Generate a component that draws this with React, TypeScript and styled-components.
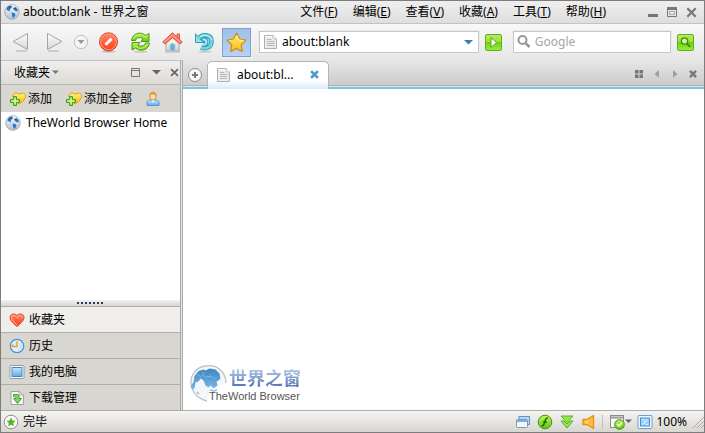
import React, { useState } from 'react';
import styled, { createGlobalStyle } from 'styled-components';

const Global = createGlobalStyle`
  * { box-sizing: border-box; }
  body { margin: 0; background: #fff; }
  body, button, input {
    font: 12px/16px "Noto Sans", "Noto Sans CJK SC", sans-serif;
    color: #000;
  }
  button { margin: 0; padding: 0; border: 0; background: none; cursor: pointer; white-space: nowrap; }
  svg { display: block; flex: none; }
  ul { margin: 0; padding: 0; list-style: none; }
`;

const Window = styled.div`
  display: flex;
  flex-direction: column;
  min-height: 100vh;
  border: 1px solid #7d7d7d;
`;

const TitleBar = styled.header`
  display: flex;
  align-items: center;
  height: 23px;
  padding: 0 5px 0 3px;
  border-bottom: 1px solid #c3c3c3;
  background: linear-gradient(#efefef, #e7e7e7 50%, #dedede);
`;

const Title = styled.h1`
  margin: 0 auto 0 3px;
  font-size: 12px;
  line-height: 16px;
  font-weight: 400;
  white-space: nowrap;
`;

const Menu = styled.nav`
  display: flex;
  gap: 15px;
  margin-right: 39px;
`;

const WindowControls = styled.div`
  display: flex;
  gap: 3px;
`;

const IconButton = styled.button<{ $w?: number; $h?: number }>`
  display: flex;
  align-items: center;
  justify-content: center;
  flex: none;
  width: ${p => p.$w ?? 16}px;
  height: ${p => p.$h ?? 16}px;
`;

const ToolBar = styled.div`
  display: flex;
  align-items: center;
  height: 36px;
  padding: 0 10px 0 3px;
  background: linear-gradient(#f8f8f8, #e7e7e7);
`;

const NavGroup = styled.div`
  display: flex;
  align-items: center;
  gap: 2px;
  margin-right: 8px;
`;

const Commands = styled.div`
  display: flex;
`;

const StarToggle = styled(IconButton)`
  border: 1px solid #7f9fca;
  background: linear-gradient(#9fc0e8, #b6d3f4);
  box-shadow: 0 0 0 1px #f4f4f4;
`;

const Field = styled.form<{ $grow: number; $pad: number }>`
  display: flex;
  align-items: center;
  gap: 3px;
  flex: ${p => p.$grow} 1 0;
  min-width: 0;
  height: 22px;
  padding: 0 ${p => p.$pad}px;
  border: 1px solid #c6c6c6;
  background: #fff;
  box-shadow: 0 0 0 1px #ececec;
`;

const FieldInput = styled.input`
  flex: 1;
  min-width: 0;
  padding: 0;
  border: 0;
  outline: 0;
  background: transparent;
  &::placeholder { color: #a5a5a5; opacity: 1; }
`;

const GreenButton = styled.button<{ $after?: number }>`
  display: flex;
  align-items: center;
  justify-content: center;
  flex: none;
  width: 17px;
  height: 17px;
  margin: 0 ${p => p.$after ?? 0}px 0 6px;
  border: 1px solid #5fae22;
  border-radius: 2px;
  background: linear-gradient(#b5ec5c, #9be23e 45%, #70d010 50%, #97ec3c);
`;

const Body = styled.div`
  display: flex;
  flex: 1;
`;

const Sidebar = styled.aside`
  display: flex;
  flex-direction: column;
  flex: none;
  width: 179px;
  background: #d8d6d0;
`;

const Divider = styled.div`
  flex: none;
  width: 3px;
  border: solid #aaa;
  border-width: 0 1px;
  background: #e2e2e2;
`;

const PanelHeader = styled.div`
  display: flex;
  align-items: center;
  height: 25px;
  padding: 0 0 0 13px;
  border-top: 1px solid #c4c4c4;
  border-bottom: 1px solid #b8b7b4;
  background: linear-gradient(#f0efed, #dddbd6);
`;

const PanelTitle = styled.button`
  display: flex;
  align-items: center;
  gap: 2px;
  margin-right: auto;
`;

const PanelTools = styled.div`
  display: flex;
  gap: 5px;
`;

const FavouriteTools = styled.div`
  display: flex;
  align-items: center;
  gap: 13px;
  height: 27px;
  padding: 0 8px;
`;

const LabelButton = styled.button`
  display: flex;
  align-items: center;
  gap: 2px;
`;

const Favourites = styled.ul`
  flex: 1;
  background: #fff;
`;

const FavouriteLink = styled.a`
  display: flex;
  align-items: center;
  gap: 5px;
  height: 22px;
  padding: 0 4px;
  color: #000;
  text-decoration: none;
  white-space: nowrap;
`;

const Splitter = styled.div`
  display: flex;
  align-items: center;
  justify-content: center;
  height: 6px;
  background: linear-gradient(#f2f2f2, #d5d5d5);
`;

const Sections = styled.ul`
  flex: none;
`;

const SectionButton = styled.button<{ $active: boolean }>`
  display: flex;
  align-items: center;
  gap: 4px;
  width: 100%;
  height: 26px;
  padding: 0 8px;
  border-top: 1px solid #aeada9;
  background: ${p => (p.$active ? '#efeeeb' : 'transparent')};
`;

const Main = styled.main`
  display: flex;
  flex-direction: column;
  flex: 1;
  min-width: 0;
  background: #fff;
`;

const TabBar = styled.div`
  display: flex;
  align-items: flex-end;
  height: 29px;
  padding: 0 3px 0 4px;
  border-bottom: 2px solid #80c2e2;
  background: linear-gradient(#e7e7e7, #c9c9c9);
  box-shadow: inset 0 -1px #d3e6f0, inset 0 -2px #b2b2b2;
`;

const NewTab = styled(IconButton)`
  margin: 0 4px 4px 0;
`;

const Tab = styled.div`
  display: flex;
  align-items: center;
  width: 122px;
  height: 28px;
  margin-bottom: -2px;
  padding: 0 7px 2px 8px;
  border: 1px solid #b4b4b4;
  border-bottom: 0;
  border-radius: 5px 5px 0 0;
  background: linear-gradient(#fff 68%, #d9ebf9);
`;

const TabLabel = styled.button`
  display: flex;
  align-items: center;
  gap: 5px;
  margin-right: auto;
`;

const TabTools = styled.div`
  display: flex;
  gap: 2px;
  margin: 0 0 5px auto;
`;

const Page = styled.section`
  display: flex;
  align-items: flex-end;
  flex: 1;
  padding: 0 7px 7px;
`;

const Logo = styled.div`
  display: grid;
  grid-template: 24px 14px / 19px auto;
  justify-items: start;
`;

const LogoGlobe = styled.div`
  grid-area: 1 / 1 / 3 / 2;
  width: 19px;
`;

const LogoName = styled.div`
  padding-left: 20px;
  font: 700 18px/24px "Noto Sans CJK SC", sans-serif;
  color: transparent;
  background: linear-gradient(#a9bfe2 25%, #5c7ab8 85%);
  background-clip: text;
`;

const LogoCaption = styled.div`
  font: 11px/14px "Liberation Sans", Arial, sans-serif;
  color: #555;
  white-space: nowrap;
`;

const StatusBar = styled.footer`
  display: flex;
  align-items: center;
  gap: 5px;
  height: 22px;
  padding: 0 0 0 2px;
  border-top: 1px solid #aeada9;
  background: linear-gradient(#f5f4f2, #d8d6d0);
`;

const StatusText = styled.span`
  margin: 0 auto 0 -1px;
`;

const StatusTools = styled.div`
  display: flex;
  gap: 6px;
`;

const StatusRule = styled.span`
  width: 1px;
  height: 14px;
  background: #c2c0bb;
`;

const Zoom = styled.button`
  display: flex;
  align-items: center;
  gap: 3px;
`;

const Svg = ({ s = 16, w, h, box = '0 0 16 16', children }: { s?: number; w?: number; h?: number; box?: string; children: React.ReactNode }) => (
  <svg width={w ?? s} height={h ?? s} viewBox={box} fill="none" aria-hidden="true">{children}</svg>
);

const GradientSheet = styled.svg`
  position: absolute;
`;

const Gradients = () => (
  <GradientSheet width="0" height="0" aria-hidden="true">
    <defs>
      {[
        ['gSilver', '#ffffff', '#d5d5d5'],
        ['gRed', '#ff8a6a', '#ff3a18'],
        ['gGreen', '#c4f45c', '#5cc816'],
        ['gGold', '#fff17a', '#ffba12'],
        ['gBlue', '#c9e8ff', '#5da8ef'],
        ['gGlobe', '#fbfcfd', '#b4bfcd'],
        ['gLand', '#3a86c4', '#7db9e2'],
      ].map(([id, a, b]) => (
        <linearGradient key={id} id={id} x1="0" y1="0" x2="0" y2="1">
          <stop stopColor={a} /><stop offset="1" stopColor={b} />
        </linearGradient>
      ))}
    </defs>
  </GradientSheet>
);

const Globe = () => (
  <Svg>
    <circle cx="8" cy="8" r="7.3" fill="url(#gGlobe)" stroke="#9ba4b0" strokeWidth=".8" />
    <path d="M2.2 5.5 4 2.8 6.8 1.6 8 2.5 7.5 4 6 5 5.8 7.2 4 6.5ZM9 4 11.5 3 13.8 5.5 13.5 7.5 11.5 7 10 6ZM7.5 8.5 10.8 9.2 11.5 11 9.5 14 8.3 12.5Z" fill="#257bc3" />
    <path d="M3 4.5 4.7 2.9 7 2.2M9.8 4.5 12 4.8" stroke="#17589b" />
  </Svg>
);

const Doc = () => (
  <Svg>
    <path d="M1.5 1.5H10L13.5 5V14.5H1.5Z" fill="#ececec" stroke="#b0b0b0" strokeLinejoin="round" />
    <path d="M2.5 2.5H9.5V5.5H12.5" stroke="#fff" />
    <path d="M10 1.5V5H13.5" fill="#fff" stroke="#bcbcbc" />
    <path d="M4 5.5H8.5M4 7.5H11.5M4 9.5H11.5M4 11.5H11.5" stroke="#b8b8b8" />
  </Svg>
);

const Heart = () => (
  <Svg>
    <path d="M8 14.5C5.5 12.4 1 9 1 5.6 1 1.5 6 .9 8 3.6 10 .9 15 1.5 15 5.6 15 9 10.5 12.4 8 14.5Z" fill="url(#gRed)" stroke="#d7533d" />
    <path d="M8 12.8C5.5 10.8 2.6 8 2.6 5.7 2.8 3.2 6 2.8 8 5.5 10 2.8 13.2 3.2 13.4 5.7" stroke="#ffb9a2" />
  </Svg>
);

const GoldHeart = () => (
  <Svg w={17}>
    <path d="M10 13C8 12 4 9.5 3.5 5.5 3.5 1.5 7.5 1 9.5 3.5 12 1 16.5 2 16 5.5 15.5 9 12 11.5 10 13Z" fill="url(#gGold)" stroke="#e0a010" />
    <path d="M5 5.5C5 3 7.5 2.8 9.5 5.5 11 3.3 14.5 3 14.4 5.5" stroke="#ffe95e" />
    <path d="M4 5.5H7V8.5H10V11.5H7V14.5H4V11.5H1V8.5H4Z" fill="#9ae04a" stroke="#4b9b22" />
    <path d="M5.5 7V13M2.5 10H8.5" stroke="#e0ffc0" />
  </Svg>
);

const Person = () => (
  <Svg>
    <path d="M2 14.5V11.5C2 9.5 4 9 6 9L8 11 10 9C12 9 14 9.5 14 11.5V14.5Z" fill="url(#gBlue)" stroke="#5e94d4" />
    <path d="M6 8.5 8 12 10 8.5" fill="#fff" />
    <ellipse cx="8" cy="5" rx="3.3" ry="4" fill="#ffdca5" stroke="#d78f38" />
    <path d="M5 4.5C5 0 11 0 11 4.5 9.5 4.5 8 3 7 3.3Z" fill="#e29a3c" />
  </Svg>
);

const Caret = ({ color = '#666', s = 9 }: { color?: string; s?: number }) => (
  <Svg w={s} h={5} box="0 0 9 5"><path d="M0 0H9L4.5 4.5Z" fill={color} /></Svg>
);

const Cross = ({ color = '#686868', s = 10, weight = 2 }: { color?: string; s?: number; weight?: number }) => (
  <Svg s={s} box="0 0 10 10"><path d="M1.2 1.2 8.8 8.8M8.8 1.2 1.2 8.8" stroke={color} strokeWidth={weight} /></Svg>
);

const Back = () => (
  <Svg s={20} box="0 0 20 20">
    <path d="M5 19H16" stroke="#c3c3c3" strokeWidth="1.5" />
    <path d="M16.5 1.5V17.5L2 9.5Z" fill="url(#gSilver)" stroke="#a4a4a4" strokeLinejoin="round" />
  </Svg>
);

const Forward = () => (
  <Svg s={20} box="0 0 20 20">
    <path d="M3 19H14" stroke="#c3c3c3" strokeWidth="1.5" />
    <path d="M2.5 1.5V17.5L17 9.5Z" fill="url(#gSilver)" stroke="#a4a4a4" strokeLinejoin="round" />
  </Svg>
);

const Stop = () => (
  <Svg s={21} box="0 0 21 21">
    <ellipse cx="10.5" cy="19.5" rx="7" ry="1.2" fill="#bbb" />
    <circle cx="10.5" cy="9.8" r="9" fill="url(#gRed)" stroke="#d83c21" />
    <circle cx="10.5" cy="9.8" r="7.9" stroke="#ff9d7d" />
    <path d="M7.5 12.8 13.5 6.8" stroke="#fff" strokeWidth="3" />
  </Svg>
);

const Refresh = () => (
  <Svg s={21} box="0 0 21 21">
    <ellipse cx="10.5" cy="19.7" rx="7" ry="1" fill="#c6cabf" />
    <path d="M1.5 8.5C2.5 1 11-1 15.5 3.5L19 1.5V9.5H11L13 7C10.5 4.5 6.5 5.5 5.5 8.5Z" fill="url(#gGreen)" stroke="#4e9e16" strokeLinejoin="round" />
    <path d="M19.5 11C18.5 18.5 10 20 5.5 16L2 18V10.5H10L8 13C10.5 15 14.5 14 15.5 11Z" fill="url(#gGreen)" stroke="#4e9e16" strokeLinejoin="round" />
    <path d="M3 7C6 1.5 11.5 1 15 5.2L17.8 3.8M17.5 12.5C14 17 9 17.5 6 14.3L3.5 15.5" stroke="#c9f56e" />
  </Svg>
);

const HomeIcon = () => (
  <Svg s={21} box="0 0 21 21">
    <path d="M3 20H18" stroke="#b8b8b8" />
    <path d="M4 10 10.5 4 17 10V19H4Z" fill="url(#gSilver)" stroke="#a9a9a9" />
    <path d="M8 19V13.5C8 11 13 11 13 13.5V19Z" fill="#5ab3e2" stroke="#c4c4c4" />
    <path d="M15 2H17.5V7L15 5Z" fill="#fa8a78" stroke="#dc5b48" />
    <path d="M10.5.8.7 10 3 12 10.5 5.7 18 12 20.3 10Z" fill="#ff7a64" stroke="#dd5440" strokeLinejoin="round" />
    <path d="M2.5 10 10.5 3 18.5 10" stroke="#ffab98" />
  </Svg>
);

const Undo = () => (
  <Svg s={21} box="0 0 21 21">
    <ellipse cx="11" cy="19.7" rx="6.5" ry="1" fill="#c3c9ca" />
    <path d="M4.5 7C7.5 1.5 17.5 2 17.5 9.5 17.5 15.5 11.5 17.5 7 15.5M6 8.5C9 5.8 13 8 12 11 11.5 12.5 10 12.8 9 12.3" stroke="#2e9db6" strokeWidth="4.6" />
    <path d="M1.5 1.8V10.5H10L6.5 7.5Z" fill="#8fdfe9" stroke="#2e9db6" strokeLinejoin="round" />
    <path d="M4.5 7C7.5 1.5 17.5 2 17.5 9.5 17.5 15.5 11.5 17.5 7 15.5" stroke="#72d2e0" strokeWidth="2.8" />
    <path d="M8.5 7.6C11.5 6.8 13 9 12.3 11 11.7 12.5 10 12.8 9 12.3" stroke="#b9eef3" strokeWidth="2" />
    <path d="M5.5 5C9.5 1.5 16.5 3 17.8 8" stroke="#c5f4f8" />
  </Svg>
);

const Star = () => (
  <Svg s={21} box="0 0 21 21">
    <path d="M10.5 1 13.6 7 20 8 15.2 12.8 16.2 19.5 10.5 16.4 4.8 19.5 5.8 12.8 1 8 7.4 7Z" fill="url(#gGold)" stroke="#d28a16" strokeWidth="1.2" strokeLinejoin="round" />
    <path d="M10.5 3.4 12.8 8 17.5 8.8" stroke="#fff9ad" />
  </Svg>
);

const Clock = () => (
  <Svg>
    <circle cx="8" cy="8" r="6.7" fill="#d9efff" stroke="#4b93d0" strokeWidth="1.2" />
    <path d="M8 3.5V8.5H3.5V6.5" stroke="#ff9b14" strokeWidth="1.6" />
    <path d="M12 5V9L9 12" stroke="#a5d8ff" />
  </Svg>
);

const Computer = () => (
  <Svg>
    <rect x="1" y="1.5" width="14" height="13" rx="1" fill="#fff" stroke="#8f9aa6" />
    <rect x="3" y="3.5" width="10" height="9" fill="url(#gBlue)" stroke="#4c86bd" />
  </Svg>
);

const Download = () => (
  <Svg>
    <path d="M2 1.5H10L14.5 5V14.5H2Z" fill="#f8faf7" stroke="#9fa19d" />
    <path d="M10 1.5V5H14.5" stroke="#a6a8a4" />
    <path d="M4.5 4.5H8C10.5 5 10.5 7 10 8.5H12.5L8.5 13.5 4.5 8.5H7C7.3 7 6.3 6.5 4.5 6.5Z" fill="#7fd75a" stroke="#44a044" />
  </Svg>
);

const SmallStar = () => (
  <Svg>
    <circle cx="8" cy="8" r="6.8" fill="#fafafa" stroke="#8e8e8e" />
    <path d="m8 3.4 1.4 3 3.2.4-2.4 2.2.7 3.3L8 10.7l-2.9 1.6.7-3.3-2.4-2.2 3.2-.4Z" fill="#59b51d" />
  </Svg>
);

const favouriteTools = [
  { label: '添加', icon: <GoldHeart /> },
  { label: '添加全部', icon: <GoldHeart /> },
];

const sections = [
  { label: '收藏夹', icon: <Heart /> },
  { label: '历史', icon: <Clock /> },
  { label: '我的电脑', icon: <Computer /> },
  { label: '下载管理', icon: <Download /> },
];

const menus = [['文件', 'F'], ['编辑', 'E'], ['查看', 'V'], ['收藏', 'A'], ['工具', 'T'], ['帮助', 'H']];

const commands = [
  { label: '停止', icon: <Stop /> },
  { label: '刷新', icon: <Refresh /> },
  { label: '主页', icon: <HomeIcon /> },
  { label: '恢复', icon: <Undo /> },
];

export default function App() {
  const [address, setAddress] = useState('about:blank');
  const [query, setQuery] = useState('');
  const [section, setSection] = useState('收藏夹');

  return (
    <>
      <Global />
      <Gradients />
      <Window>
        <TitleBar>
          <Globe />
          <Title>about:blank - 世界之窗</Title>
          <Menu>
            {menus.map(([name, key]) => (
              <button key={key}>{name}(<u>{key}</u>)</button>
            ))}
          </Menu>
          <WindowControls>
            <IconButton aria-label="最小化"><Svg s={12} box="0 0 12 12"><path d="M1 9.5H11" stroke="#777" strokeWidth="3" /></Svg></IconButton>
            <IconButton aria-label="最大化"><Svg s={12} box="0 0 12 12"><path d="M1.5 2V10.5H10.5V2" stroke="#777" /><path d="M1 2.5H11" stroke="#777" strokeWidth="3" /><path d="M3.5 5.5H8.5V8.5H3.5Z" stroke="#aaa" /></Svg></IconButton>
            <IconButton aria-label="关闭"><Cross color="#777" s={11} /></IconButton>
          </WindowControls>
        </TitleBar>

        <ToolBar>
          <NavGroup>
            <Commands>
              <IconButton $w={34} $h={29} aria-label="后退"><Back /></IconButton>
              <IconButton $w={34} $h={29} aria-label="前进"><Forward /></IconButton>
              <IconButton $w={18} $h={29} aria-label="历史记录">
                <Svg><circle cx="8" cy="8" r="6.7" fill="#f4f4f4" stroke="#bdbdbd" /><path d="M4.5 6H11.5L8 10Z" fill="#999" /></Svg>
              </IconButton>
            </Commands>
            <Commands>
              {commands.map(c => (
                <IconButton key={c.label} $w={32} $h={29} aria-label={c.label}>{c.icon}</IconButton>
              ))}
            </Commands>
            <StarToggle $w={29} $h={29} aria-label="收藏夹" aria-pressed="true"><Star /></StarToggle>
          </NavGroup>
          <Field $grow={220} $pad={3} onSubmit={e => e.preventDefault()}>
            <Doc />
            <FieldInput aria-label="地址" value={address} onChange={e => setAddress(e.target.value)} />
            <IconButton type="button" $w={13} aria-label="地址列表"><Caret color="#397fac" /></IconButton>
          </Field>
          <GreenButton $after={11} aria-label="转到">
            <Svg s={15} box="0 0 15 15"><path d="M5 2.5V12.5L10.5 7.5Z" fill="#fff" stroke="#55a01e" /></Svg>
          </GreenButton>
          <Field $grow={158} $pad={2} onSubmit={e => e.preventDefault()}>
            <Svg><circle cx="6.5" cy="6" r="4" stroke="#999" strokeWidth="2" /><path d="m9.5 9 4 4" stroke="#999" strokeWidth="2.5" /></Svg>
            <FieldInput aria-label="搜索" placeholder="Google" value={query} onChange={e => setQuery(e.target.value)} />
          </Field>
          <GreenButton aria-label="搜索">
            <Svg s={15} box="0 0 15 15"><circle cx="6.5" cy="6" r="3.2" fill="#d0f49a" stroke="#3d8a14" strokeWidth="1.3" /><path d="m9 8.7 3.2 3.2" stroke="#3d8a14" strokeWidth="2" /></Svg>
          </GreenButton>
        </ToolBar>

        <Body>
          <Sidebar>
            <PanelHeader>
              <PanelTitle>收藏夹<Caret s={7} color="#777" /></PanelTitle>
              <PanelTools>
                <IconButton aria-label="固定"><Svg s={9} box="0 0 9 9"><path d="M.5.5H8.5V8.5H.5ZM.5 2.5H8.5" stroke="#777" /></Svg></IconButton>
                <IconButton aria-label="选项"><Caret /></IconButton>
                <IconButton $w={11} aria-label="关闭侧栏"><Cross s={9} /></IconButton>
              </PanelTools>
            </PanelHeader>
            <FavouriteTools>
              {favouriteTools.map(t => <LabelButton key={t.label}>{t.icon}{t.label}</LabelButton>)}
              <IconButton aria-label="用户"><Person /></IconButton>
            </FavouriteTools>
            <Favourites>
              <li><FavouriteLink href="#"><Globe />TheWorld Browser Home</FavouriteLink></li>
            </Favourites>
            <Splitter>
              <Svg w={27} h={2} box="0 0 27 2"><path d="M0 1H27" stroke="#2a3d60" strokeWidth="2" strokeDasharray="2 2" /></Svg>
            </Splitter>
            <Sections>
              {sections.map(s => (
                <li key={s.label}>
                  <SectionButton $active={section === s.label} onClick={() => setSection(s.label)}>{s.icon}{s.label}</SectionButton>
                </li>
              ))}
            </Sections>
          </Sidebar>
          <Divider />
          <Main>
            <TabBar>
              <NewTab aria-label="新建标签">
                <Svg><circle cx="8" cy="8" r="6.5" fill="#f5f5f5" stroke="#8b8b8b" /><path d="M8 5V11M5 8H11" stroke="#777" strokeWidth="2" /></Svg>
              </NewTab>
              <Tab>
                <TabLabel><Doc />about:bl...</TabLabel>
                <IconButton $w={14} aria-label="关闭标签"><Cross color="#4798cb" s={9} weight={3} /></IconButton>
              </Tab>
              <TabTools>
                <IconButton aria-label="标签列表"><Svg s={8} box="0 0 8 8"><path d="M0 0H3.5V3.5H0ZM4.5 0H8V3.5H4.5ZM0 4.5H3.5V8H0ZM4.5 4.5H8V8H4.5Z" fill="#777" /></Svg></IconButton>
                <IconButton aria-label="上一个标签"><Svg s={8} box="0 0 8 8"><path d="M6 0V8L1.5 4Z" fill="#a0a0a0" /></Svg></IconButton>
                <IconButton aria-label="下一个标签"><Svg s={8} box="0 0 8 8"><path d="M2 0V8L6.5 4Z" fill="#a0a0a0" /></Svg></IconButton>
                <IconButton aria-label="关闭当前标签"><Cross s={8} color="#777" weight={3} /></IconButton>
              </TabTools>
            </TabBar>
            <Page>
              <Logo>
                <LogoGlobe>
                  <Svg w={38} h={38} box="0 0 38 38">
                    <path d="M17 36C-4 31-4 4 15 1 26-1 36 6 36 18L20 24Z" fill="#f3f6fa" />
                    <path d="M17 36C-4 31-4 4 15 1 26-1 36 6 36 18" stroke="#bcc3cc" strokeWidth="1.3" />
                    <path d="m3.5 17 1-6 4-5 5-1.5 2 1 4-2 6 1 4 4 1 5-2 2-2 1 1 4-4 3-3-3-2 2-3-2-2-5-3-2-2 3-3 1-1 6-2 1-2-3Z" fill="url(#gLand)" />
                    <path d="m14 7-2 3 4 2 5-1 4 3M7 9l4 3" stroke="#7cb8e0" />
                    <path d="m20 25 4 1 3-1M7 27l2 2" stroke="#8fbde0" strokeWidth="1.5" />
                  </Svg>
                </LogoGlobe>
                <LogoName>世界之窗</LogoName>
                <LogoCaption>TheWorld Browser</LogoCaption>
              </Logo>
            </Page>
          </Main>
        </Body>

        <StatusBar>
          <SmallStar />
          <StatusText>完毕</StatusText>
          <StatusTools>
            <IconButton aria-label="窗口"><Svg><rect x="4" y="2.5" width="10.5" height="8" fill="#b6d8ef" stroke="#6496c0" /><rect x="1.5" y="5.5" width="11" height="8" rx="1" fill="#f4f7fa" stroke="#7b98b4" /><path d="M2 7H12" stroke="#78aee1" strokeWidth="2" /></Svg></IconButton>
            <IconButton aria-label="Flash"><Svg><circle cx="8" cy="8" r="6.8" fill="url(#gGreen)" stroke="#3f9811" /><path d="M11 4C8 4 8 7 7.5 9 7 11 6 12 4.5 12M6 8H10" stroke="#236b0c" strokeWidth="1.5" /></Svg></IconButton>
            <IconButton aria-label="下载"><Svg><path d="M2 2H14L8 8.5ZM2 7H5L8 10 11 7H14L8 14Z" fill="#93ea48" stroke="#5aae25" strokeLinejoin="round" /></Svg></IconButton>
            <IconButton aria-label="声音"><Svg><path d="M2 5.5H6L12.5 1.5V14.5L6 10.5H2Z" fill="#ffc03c" stroke="#ec8e13" strokeWidth="1.4" strokeLinejoin="round" /><path d="M6 6V10" stroke="#fff19e" /></Svg></IconButton>
          </StatusTools>
          <StatusRule />
          <IconButton $w={24} aria-label="页面安全">
            <Svg><rect x="1.5" y="1.5" width="13" height="12" fill="#fafafa" stroke="#8c8c8c" /><path d="M2 3.5H14" stroke="#999" strokeWidth="2" /><circle cx="10.5" cy="10.5" r="4.8" fill="url(#gGreen)" stroke="#3e9511" /><path d="m8 10 2 2 3-3.5" stroke="#fff" strokeWidth="1.5" /></Svg>
            <Caret s={7} />
          </IconButton>
          <Zoom>
            <Svg><rect x="1" y="1.5" width="14" height="13" rx="1" fill="#edf7ff" stroke="#6e9fce" /><rect x="3.5" y="4" width="9" height="8" fill="#9cd1ff" stroke="#4b91d0" /><path d="m6 10.5 4-5M5.5 5.5H7M9 10.5h1.5" stroke="#fff" /></Svg>
            100%
          </Zoom>
          <Svg s={12} box="0 0 12 12"><path d="m1 12 11-11M5 12l7-7M9 12l3-3" stroke="#aaa" /></Svg>
        </StatusBar>
      </Window>
    </>
  );
}
